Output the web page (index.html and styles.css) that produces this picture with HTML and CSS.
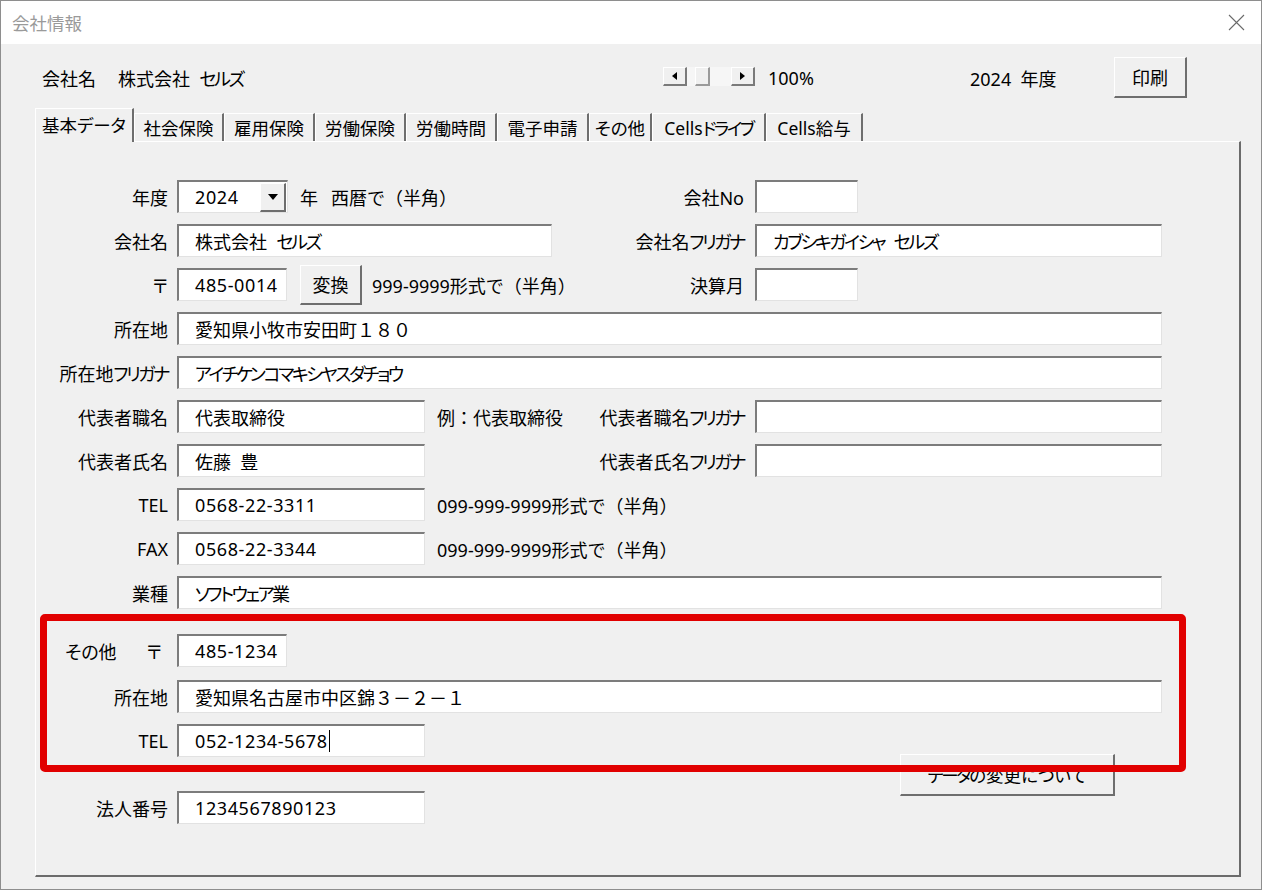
FILE: index.html
```html
<!DOCTYPE html>
<html lang="ja">
<head>
<meta charset="utf-8">
<title>会社情報</title>
<link rel="stylesheet" href="styles.css">
</head>
<body>
<div class="window">
  <header class="titlebar">
    <span class="title">会社情報</span>
    <svg class="close" width="17" height="17" viewBox="0 0 17 17"><path d="M1 1L16 16M16 1L1 16" stroke="#6a6a6a" stroke-width="1.1" fill="none"/></svg>
  </header>

  <div class="content">
    <div class="toprow">
      <div class="company">会社名<span class="company-name">株式会社&nbsp;&nbsp;<span class="k">セルズ</span></span></div>
      <div class="zoom-ctl">
        <span class="sbtn"><svg width="5" height="8" viewBox="0 0 5 8"><path d="M5 0V8L0 4Z" fill="#000"/></svg></span>
        <span class="track"><span class="thumb"></span></span>
        <span class="sbtn"><svg width="5" height="8" viewBox="0 0 5 8"><path d="M0 0V8L5 4Z" fill="#000"/></svg></span>
      </div>
      <span class="zoom-val">100%</span>
      <span class="fiscal">2024&nbsp;&nbsp;年度</span>
      <button class="btn print">印刷</button>
    </div>

    <nav class="tabs">
      <span class="tab active" style="width:99px">基本データ</span>
      <span class="tab" style="width:90px">社会保険</span>
      <span class="tab" style="width:91px">雇用保険</span>
      <span class="tab" style="width:91px">労働保険</span>
      <span class="tab" style="width:91px">労働時間</span>
      <span class="tab" style="width:92px">電子申請</span>
      <span class="tab" style="width:63px">その他</span>
      <span class="tab" style="width:114px">Cells<span class="k">ドライブ</span></span>
      <span class="tab" style="width:97px">Cells給与</span>
    </nav>

    <section class="panel">
      <div class="row">
        <span class="label">年度</span>
        <div class="cell">
          <div class="field combo num"><span>2024</span><span class="drop"><svg width="10" height="6" viewBox="0 0 10 6"><path d="M0 0H10L5 6Z" fill="#000"/></svg></span></div>
          <span class="note"><span class="gap">年</span>西暦で（半角）</span>
        </div>
        <span class="label label-r">会社No</span>
        <div class="cell"><div class="field w103"></div></div>
      </div>

      <div class="row">
        <span class="label">会社名</span>
        <div class="cell"><div class="field w375">株式会社&nbsp;&nbsp;<span class="k">セルズ</span></div></div>
        <span class="label label-r">会社名<span class="k">フリガナ</span></span>
        <div class="cell"><div class="field wr"><span class="k">カブシキガイシャ</span>&nbsp;&nbsp;<span class="k">セルズ</span></div></div>
      </div>

      <div class="row">
        <span class="label">〒</span>
        <div class="cell">
          <div class="field w110 num">485-0014</div>
          <button class="btn convert">変換</button>
          <span class="note2">999-9999形式で（半角）</span>
        </div>
        <span class="label label-r">決算月</span>
        <div class="cell"><div class="field w103"></div></div>
      </div>

      <div class="row">
        <span class="label">所在地</span>
        <div class="cell span3"><div class="field wfull wide">愛知県小牧市安田町１８０</div></div>
      </div>

      <div class="row">
        <span class="label">所在地<span class="k">フリガナ</span></span>
        <div class="cell span3"><div class="field wfull"><span class="k">アイチケンコマキシヤスダチョウ</span></div></div>
      </div>

      <div class="row">
        <span class="label">代表者職名</span>
        <div class="cell">
          <div class="field w248">代表取締役</div>
          <span class="note">例：代表取締役</span>
        </div>
        <span class="label label-r">代表者職名<span class="k">フリガナ</span></span>
        <div class="cell"><div class="field wr"></div></div>
      </div>

      <div class="row">
        <span class="label">代表者氏名</span>
        <div class="cell"><div class="field w248">佐藤&nbsp;&nbsp;豊</div></div>
        <span class="label label-r">代表者氏名<span class="k">フリガナ</span></span>
        <div class="cell"><div class="field wr"></div></div>
      </div>

      <div class="row">
        <span class="label">TEL</span>
        <div class="cell">
          <div class="field w248 num">0568-22-3311</div>
          <span class="note">099-999-9999形式で（半角）</span>
        </div>
      </div>

      <div class="row">
        <span class="label">FAX</span>
        <div class="cell">
          <div class="field w248 num">0568-22-3344</div>
          <span class="note">099-999-9999形式で（半角）</span>
        </div>
      </div>

      <div class="row">
        <span class="label">業種</span>
        <div class="cell span3"><div class="field wfull"><span class="k">ソフトウェア</span>業</div></div>
      </div>

      <div class="row other-first">
        <span class="label label-split"><span class="other">その他</span><span>〒</span></span>
        <div class="cell"><div class="field w110 num">485-1234</div></div>
      </div>

      <div class="row other-addr">
        <span class="label">所在地</span>
        <div class="cell span3"><div class="field wfull wide">愛知県名古屋市中区錦３－２－１</div></div>
      </div>

      <div class="row">
        <span class="label">TEL</span>
        <div class="cell"><div class="field w248 num">052-1234-5678<span class="caret"></span></div></div>
        <span></span>
        <div class="cell cell-top"><button class="btn change"><span class="k">データ</span>の変更について</button></div>
      </div>

      <div class="row corp-row">
        <span class="label">法人番号</span>
        <div class="cell"><div class="field w248 num">1234567890123</div></div>
      </div>

      <div class="highlight"></div>
    </section>
  </div>
</div>
</body>
</html>
```

FILE: styles.css
```css
html, body {
  margin: 0;
  padding: 0;
}

body {
  font-family: "Noto Sans", "Noto Sans CJK JP", sans-serif;
  font-size: 18px;
  color: #000;
  background: #f0f0f0;
  font-feature-settings: "palt";
}

/* narrow katakana runs */
.k {
  letter-spacing: -2.4px;
}

.window {
  width: 1262px;
  height: 890px;
  box-sizing: border-box;
  border: 1px solid #8e8e8e;
  background: #f0f0f0;
  overflow: hidden;
}

/* title bar */
.titlebar {
  height: 43px;
  background: #fff;
  display: flex;
  align-items: center;
  justify-content: space-between;
  padding: 0 16px 0 11px;
}

.title {
  color: #9a9a9a;
  font-size: 17.5px;
}

.content {
  padding: 13px 0 0 34px;
}

/* header line with company, zoom and print */
.toprow {
  display: flex;
  align-items: center;
  height: 41px;
}

.company {
  box-sizing: border-box;
  width: 628px;
  padding-left: 7px;
  white-space: nowrap;
}

.company-name {
  margin-left: 22px;
}

.zoom-ctl {
  display: flex;
  height: 19px;
  width: 92px;
  margin-top: -2px;
}

.sbtn {
  box-sizing: border-box;
  width: 24px;
  height: 19px;
  display: flex;
  align-items: center;
  justify-content: center;
  background: #f0f0f0;
  border-style: solid;
  border-width: 1px 2px 2px 1px;
  border-color: #fff #7a7a7a #7a7a7a #fff;
}

.track {
  width: 44px;
  height: 19px;
  background: #f6f6f6;
  position: relative;
}

.thumb {
  position: absolute;
  left: 8px;
  top: 0;
  box-sizing: border-box;
  width: 15px;
  height: 19px;
  background: #f0f0f0;
  border-style: solid;
  border-width: 1px 2px 2px 1px;
  border-color: #fff #9a9a9a #9a9a9a #fff;
}

.zoom-val {
  margin-left: 13px;
  width: 202px;
}

.fiscal {
  width: 144px;
  white-space: nowrap;
}

/* raised buttons */
.btn {
  box-sizing: border-box;
  font: inherit;
  color: #000;
  background: #f0f0f0;
  border-style: solid;
  border-width: 1px 2px 2px 1px;
  border-color: #fff #6e6e6e #6e6e6e #fff;
  padding: 0;
  display: flex;
  align-items: center;
  justify-content: center;
  flex: none;
}

.print {
  width: 73px;
  height: 41px;
}

/* tab strip */
.tabs {
  display: flex;
  align-items: flex-end;
  height: 33px;
  margin-top: 10px;
}

.tab {
  box-sizing: border-box;
  height: 28px;
  display: flex;
  align-items: center;
  justify-content: center;
  white-space: nowrap;
  background: #f0f0f0;
  border-style: solid;
  border-width: 1px 2px 0 1px;
  border-color: #fff #6e6e6e #fff #fff;
  font-size: 17.5px;
}

.tab.active {
  height: 34px;
  margin-bottom: -1px;
  position: relative;
  z-index: 1;
  padding-bottom: 2px;
}

/* tab page */
.panel {
  position: relative;
  box-sizing: border-box;
  width: 1206px;
  height: 736px;
  padding-top: 38px;
  border-style: solid;
  border-width: 1px 2px 2px 1px;
  border-color: #fff #6b6b6b #6b6b6b #fff;
}

.row {
  display: grid;
  grid-template-columns: 141px 403px 175px 407px;
  grid-template-rows: 33px;
  height: 33px;
  margin-top: 11px;
}

.row:first-child {
  margin-top: 0;
}

.row.other-first {
  margin-top: 25px;
}

.row.other-addr {
  margin-top: 13px;
}

.row.corp-row {
  margin-top: 34px;
}

.label {
  display: flex;
  align-items: center;
  justify-content: flex-end;
  padding-right: 9px;
  white-space: nowrap;
}

.label-r {
  padding-right: 11px;
}

.label-split {
  justify-content: space-between;
  padding-left: 29px;
  padding-right: 15px;
}

.cell {
  display: flex;
  align-items: center;
  white-space: nowrap;
  min-width: 0;
}

.cell-top {
  align-items: flex-start;
}

.span3 {
  grid-column: 2 / 5;
}

/* sunken text boxes */
.field {
  box-sizing: border-box;
  height: 33px;
  background: #fff;
  border-style: solid;
  border-width: 2px 1px 1px 2px;
  border-color: #7c7c7c #e2e2e2 #e2e2e2 #7c7c7c;
  padding-left: 16px;
  display: flex;
  align-items: center;
  white-space: nowrap;
  flex: none;
}

.num {
  letter-spacing: 0.6px;
}

.wide {
  font-feature-settings: normal;
}

.w103 { width: 103px; }
.w110 { width: 110px; }
.w248 { width: 248px; }
.w375 { width: 375px; }
.wr { width: 407px; }
.wfull { width: 985px; }

.combo {
  width: 111px;
  justify-content: space-between;
  padding-right: 1px;
}

.drop {
  box-sizing: border-box;
  width: 26px;
  height: 29px;
  display: flex;
  align-items: center;
  justify-content: center;
  background: #f0f0f0;
  border-style: solid;
  border-width: 1px 2px 2px 1px;
  border-color: #fff #6e6e6e #6e6e6e #fff;
}

.note {
  margin-left: 12px;
  font-feature-settings: normal;
}

.note .gap {
  margin-right: 13px;
}

.convert {
  width: 62px;
  height: 40px;
  margin-left: 13px;
}

.note2 {
  margin-left: 10px;
  font-feature-settings: normal;
}

.caret {
  display: inline-block;
  width: 1px;
  height: 22px;
  background: #000;
  margin-left: 1px;
}

.change {
  width: 215px;
  height: 42px;
  margin-top: 30px;
  margin-left: 145px;
  font-size: 17.5px;
}

/* red annotation frame around the secondary address block */
.highlight {
  position: absolute;
  left: 4px;
  top: 472px;
  width: 1146px;
  height: 158px;
  box-sizing: border-box;
  border: 7px solid #e10000;
  border-radius: 5px;
  pointer-events: none;
}
```
